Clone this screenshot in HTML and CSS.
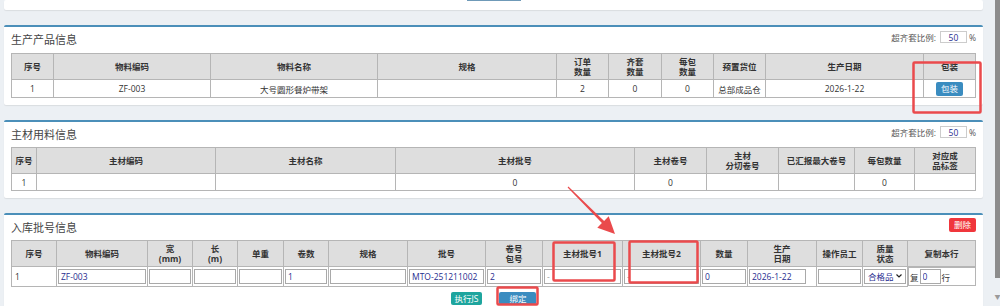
FILE: index.html
```html
<!DOCTYPE html>
<html lang="zh-CN">
<head>
  <meta charset="UTF-8">
  <title>入库批号信息</title>
  <link rel="stylesheet" href="styles.css">
</head>
<body>
  <div class="page">
    <div class="content">
      <!-- previous box, only its bottom is visible -->
      <div class="box box-top"><div class="top-btn"></div></div>

      <!-- 生产产品信息 -->
      <div class="box">
        <div class="box-header">
          <h3 class="box-title">生产产品信息</h3>
          <div class="box-tools">超齐套比例: <input class="ratio" value="50"> %</div>
        </div>
        <table class="grid">
          <colgroup>
            <col style="width:42px"><col style="width:157px"><col style="width:167px"><col style="width:179px">
            <col style="width:52px"><col style="width:53px"><col style="width:52px"><col style="width:52px">
            <col style="width:158px"><col style="width:52px">
          </colgroup>
          <thead>
            <tr>
              <th>序号</th><th>物料编码</th><th>物料名称</th><th>规格</th>
              <th>订单<br>数量</th><th>齐套<br>数量</th><th>每包<br>数量</th><th>预置货位</th>
              <th>生产日期</th><th>包装</th>
            </tr>
          </thead>
          <tbody>
            <tr>
              <td>1</td><td>ZF-003</td><td>大号圆形餐炉带架</td><td></td>
              <td>2</td><td>0</td><td>0</td><td>总部成品仓</td>
              <td>2026-1-22</td><td><button class="btn btn-primary">包装</button></td>
            </tr>
          </tbody>
        </table>
      </div>

      <!-- 主材用料信息 -->
      <div class="box">
        <div class="box-header">
          <h3 class="box-title">主材用料信息</h3>
          <div class="box-tools">超齐套比例: <input class="ratio" value="50"> %</div>
        </div>
        <table class="grid grid-compact">
          <colgroup>
            <col style="width:25px"><col style="width:179px"><col style="width:180px"><col style="width:239px">
            <col style="width:72px"><col style="width:72px"><col style="width:76px"><col style="width:60px">
            <col style="width:61px">
          </colgroup>
          <thead>
            <tr>
              <th>序号</th><th>主材编码</th><th>主材名称</th><th>主材批号</th>
              <th>主材卷号</th><th>主材<br>分切卷号</th><th>已汇报最大卷号</th><th>每包数量</th>
              <th>对应成<br>品标签</th>
            </tr>
          </thead>
          <tbody>
            <tr>
              <td>1</td><td></td><td></td><td>0</td>
              <td>0</td><td></td><td></td><td>0</td><td></td>
            </tr>
          </tbody>
        </table>
      </div>

      <!-- 入库批号信息 -->
      <div class="box">
        <div class="box-header">
          <h3 class="box-title">入库批号信息</h3>
          <div class="box-tools"><button class="btn btn-danger">删除</button></div>
        </div>
        <table class="grid grid-edit">
          <colgroup>
            <col style="width:45px"><col style="width:91px"><col style="width:45px"><col style="width:45px">
            <col style="width:46px"><col style="width:45px"><col style="width:79px"><col style="width:78px">
            <col style="width:57px"><col style="width:80px"><col style="width:78px"><col style="width:47px">
            <col style="width:69px"><col style="width:46px"><col style="width:45px"><col style="width:68px">
          </colgroup>
          <thead>
            <tr>
              <th>序号</th><th>物料编码</th><th>宽<br>(mm)</th><th>长<br>(m)</th>
              <th>单重</th><th>卷数</th><th>规格</th><th>批号</th>
              <th>卷号<br>包号</th><th>主材批号1</th><th>主材批号2</th><th>数量</th>
              <th>生产<br>日期</th><th>操作员工</th><th>质量<br>状态</th><th>复制本行</th>
            </tr>
          </thead>
          <tbody>
            <tr>
              <td class="num">1</td>
              <td><input class="cell-input" value="ZF-003"></td>
              <td><input class="cell-input"></td>
              <td><input class="cell-input"></td>
              <td><input class="cell-input"></td>
              <td><input class="cell-input" value="1"></td>
              <td><input class="cell-input"></td>
              <td><input class="cell-input" value="MTO-251211002"></td>
              <td><input class="cell-input" value="2"></td>
              <td><input class="cell-input" placeholder="-"></td>
              <td><input class="cell-input" placeholder="-"></td>
              <td><input class="cell-input" value="0"></td>
              <td><input class="cell-input date-input" value="2026-1-22"></td>
              <td><input class="cell-input"></td>
              <td>
                <select class="cell-select">
                  <option>合格品</option>
                  <option>不合格品</option>
                </select>
              </td>
              <td class="copy-cell">复<input class="cell-input copy-input" value="0">行</td>
            </tr>
          </tbody>
        </table>
        <div class="actions">
          <button class="btn btn-info">执行JS</button>
          <button class="btn btn-primary btn-bind">绑定</button>
        </div>
      </div>
    </div>

    <div class="scrollbar">
      <div class="thumb"></div>
      <div class="arrow">▼</div>
    </div>
  </div>

  <!-- annotation marks drawn over the page -->
  <svg class="marks" width="1000" height="306" viewBox="0 0 1000 306">
    <rect x="913.5" y="62.5" width="67" height="50" rx="1" />
    <rect x="553.5" y="242.5" width="61" height="38" rx="1" />
    <rect x="629.5" y="241.5" width="68" height="41" rx="1" />
    <rect x="497.5" y="287.5" width="40" height="17" rx="1" />
    <polygon class="arrow-mark" points="568.4,186.6 604.1,220.9 608.7,216.3 615,234 597.3,227.7 601.9,223.1 567.6,187.4" />
  </svg>
</body>
</html>
```

FILE: styles.css
```css
/* General */
body {
  margin: 0;
  height: 306px;
  overflow: hidden;
  position: relative;
  background: #ecf0f4;
  font-family: "Open Sans", "Noto Sans CJK SC", sans-serif;
  font-size: 8.5px;
  color: #333;
}

.page {
  display: flex;
  height: 306px;
}

.content {
  flex: 1;
  padding: 0 11px 0 4px;
}

/* Boxes */
.box {
  background: #fff;
  border-top: 2px solid #4b8fb9;
  border-radius: 2px;
  margin-bottom: 15px;
  padding-bottom: 7px;
  box-shadow: 0 1px 1px rgba(0, 0, 0, 0.08);
}

.box-top {
  border-top: none;
  height: 10px;
  padding-bottom: 0;
  display: flex;
  justify-content: center;
}

.top-btn {
  width: 54px;
  height: 1px;
  background: #6f9ab8;
}

.box-header {
  display: flex;
  justify-content: space-between;
  height: 25px;
  padding: 0 7px;
}

/* first box right under the cut-off one has a slightly taller header */
.box-top + .box .box-header {
  height: 26px;
}

.box-title {
  margin: 7px 0 0;
  font-size: 11px;
  font-weight: normal;
  line-height: 12px;
  color: #444;
}

.box-tools {
  display: flex;
  align-items: center;
  margin-top: 3px;
  height: 14px;
  color: #555;
}

.ratio {
  width: 27px;
  height: 12px;
  box-sizing: border-box;
  margin: 0 2px 0 4px;
  padding: 0;
  border: 1px solid #ccc;
  font: inherit;
  color: #1f2d8f;
  text-align: center;
}

/* Tables */
.grid {
  width: 964px;
  margin: 0 7px;
  border-collapse: collapse;
  table-layout: fixed;
}

.grid th {
  height: 25px;
  padding: 0 2px;
  background: #dedede;
  border: 1px solid #b5b5b5;
  font-weight: bold;
  line-height: 10px;
  color: #333;
}

.grid td {
  height: 17px;
  padding: 0 2px;
  border: 1px solid #b5b5b5;
  text-align: center;
  white-space: nowrap;
  overflow: hidden;
}

.grid-compact td {
  height: 16px;
}

.grid-edit td {
  padding: 0 1px;
}

.grid-edit td.num {
  text-align: left;
  padding-left: 3px;
}

.cell-input {
  display: block;
  width: 100%;
  height: 15px;
  box-sizing: border-box;
  margin: 0;
  padding: 0 2px;
  border: 1px solid #a9a9a9;
  font: inherit;
  color: #1f2d8f;
}

.cell-input::placeholder {
  color: #999;
}

.date-input {
  width: 57px;
}

.cell-select {
  display: block;
  width: 100%;
  height: 15px;
  margin: 0;
  padding: 0 10px 0 3px;
  border: 1px solid #a9a9a9;
  border-radius: 0;
  font: inherit;
  color: #1f2d8f;
  background: #fff url("data:image/svg+xml,%3Csvg xmlns='http://www.w3.org/2000/svg' width='6' height='4'%3E%3Cpath d='M0.5 0.5 L3 3 L5.5 0.5' fill='none' stroke='%23222' stroke-width='1.2'/%3E%3C/svg%3E") no-repeat right 3px center;
  appearance: none;
}

.copy-cell {
  display: flex;
  align-items: center;
  gap: 1px;
}

.grid-edit td.copy-cell {
  text-align: left;
}

.copy-input {
  width: 21px;
}

/* Buttons */
.btn {
  height: 14px;
  padding: 0 5px;
  border: none;
  border-radius: 2px;
  font: inherit;
  line-height: 14px;
  color: #fff;
  cursor: pointer;
}

.btn-primary {
  background: #3a8cc0;
}

.btn-danger {
  background: #f0363c;
}

.btn-info {
  background: #1ea59e;
  padding: 0 4px;
  height: 13px;
  line-height: 13px;
}

.btn-bind {
  padding: 0 10px;
  height: 13px;
  line-height: 13px;
}

.actions {
  display: flex;
  justify-content: center;
  gap: 17px;
  padding-top: 5px;
}

/* Scrollbar */
.scrollbar {
  width: 7px;
  display: flex;
  flex-direction: column;
  align-items: flex-end;
}

.thumb {
  width: 6px;
  height: 278px;
  background: #8c8c8c;
}

.arrow {
  margin-top: 16px;
  width: 7px;
  font-size: 6px;
  line-height: 6px;
  color: #9a9a9a;
  text-align: center;
}

/* Annotation marks */
.marks {
  position: absolute;
  top: 0;
  left: 0;
  pointer-events: none;
}

.marks rect {
  fill: none;
  stroke: #ea4a4c;
  stroke-width: 2.5;
}

.marks .arrow-mark {
  fill: #ea4a4c;
}
```
